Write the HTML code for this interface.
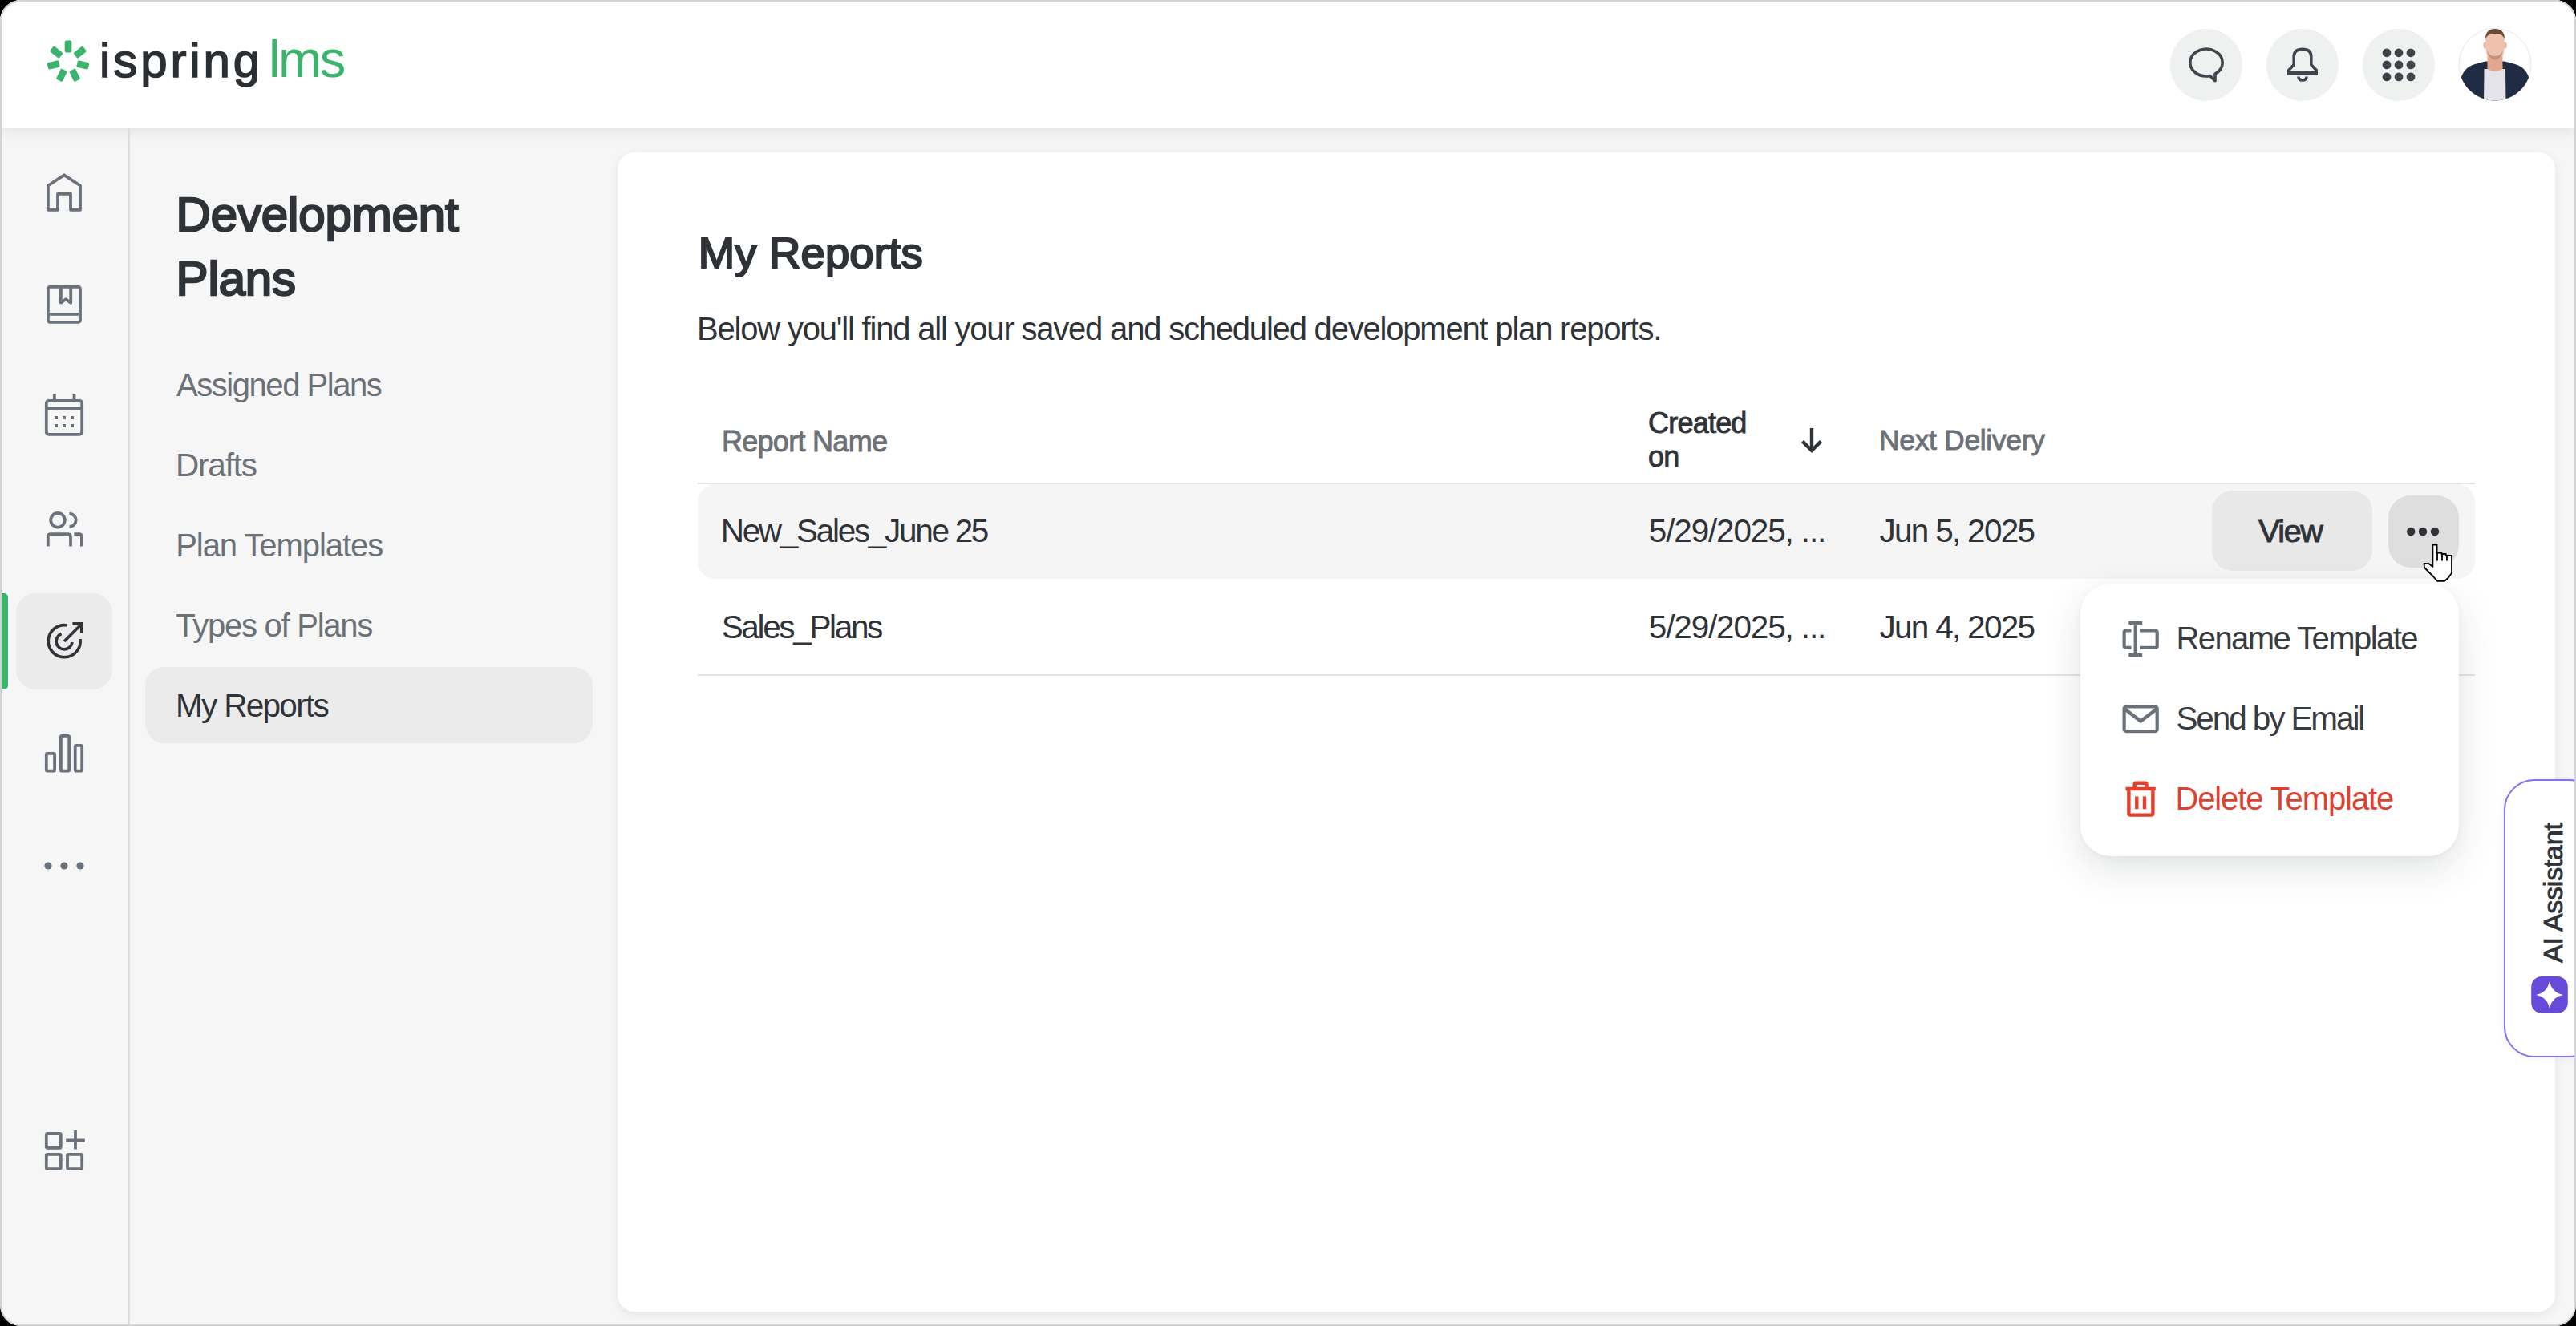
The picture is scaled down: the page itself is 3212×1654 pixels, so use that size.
<!DOCTYPE html>
<html><head><meta charset="utf-8"><title>My Reports</title>
<style>
html,body{margin:0;padding:0;width:3212px;height:1654px;overflow:hidden;background:#000;}
body{position:relative;font-family:"Liberation Sans",sans-serif;}
.abs{position:absolute;}
.t{position:absolute;white-space:nowrap;line-height:1;}
#win{position:absolute;left:0;top:0;width:3212px;height:1654px;background:#f6f6f6;border-radius:26px;overflow:hidden;}
#frame{position:absolute;left:0;top:0;width:3208px;height:1650px;border:2px solid #d3d3d3;border-radius:26px;pointer-events:none;}
#header{position:absolute;left:0;top:0;width:3212px;height:160px;background:#fff;box-shadow:0 3px 18px rgba(0,0,0,0.09);}
#divider{position:absolute;left:160px;top:160px;width:2px;height:1494px;background:#dddde0;}
#card{position:absolute;left:770px;top:190px;width:2416px;height:1446px;background:#fff;border-radius:21px;box-shadow:0 3px 14px rgba(0,0,0,0.07);}
.hc{position:absolute;top:36px;width:90px;height:90px;border-radius:50%;background:#eff0f0;}
svg{position:absolute;left:0;top:0;overflow:visible;}
</style></head>
<body>
<div id="win">
  <div id="header"></div>
  <div id="divider"></div>
  <!-- active tile -->
  <div class="abs" style="left:20px;top:740px;width:120px;height:120px;border-radius:24px;background:#ebebeb;"></div>
  <div class="abs" style="left:0px;top:740px;width:10px;height:120px;border-radius:0 5px 5px 0;background:#3cb46e;"></div>
  <!-- my reports active nav -->
  <div class="abs" style="left:181px;top:832px;width:558px;height:95px;border-radius:24px;background:#ebebeb;"></div>
  <div id="card"></div>
  <!-- header circles -->
  <div class="hc" style="left:2706px;"></div>
  <div class="hc" style="left:2826px;"></div>
  <div class="hc" style="left:2946px;"></div>
  <!-- table -->
  <div class="abs" style="left:870px;top:602px;width:2216px;height:2px;background:#e3e3e3;"></div>
  <div class="abs" style="left:870px;top:604px;width:2216px;height:118px;border-radius:22px;background:#f5f5f5;"></div>
  <div class="abs" style="left:870px;top:841px;width:2216px;height:2px;background:#e3e3e3;"></div>
  <div class="abs" style="left:2758px;top:612px;width:200px;height:100px;border-radius:26px;background:#e8e8e8;"></div>
  <div class="abs" style="left:2978px;top:618px;width:88px;height:90px;border-radius:28px;background:#dededf;"></div>
<div class="t" style="left:219.6px;top:238.2px;font-size:60.0px;color:#2f3337;letter-spacing:-0.15px;-webkit-text-stroke:2.40px #2f3337;">Development</div>
<div class="t" style="left:219.6px;top:317.9px;font-size:60.0px;color:#2f3337;letter-spacing:-0.15px;-webkit-text-stroke:2.40px #2f3337;">Plans</div>
<div class="t" style="left:220.0px;top:460.3px;font-size:40.0px;color:#6c7177;letter-spacing:-1.45px;">Assigned Plans</div>
<div class="t" style="left:219.0px;top:560.0px;font-size:40.5px;color:#6c7177;letter-spacing:-1.2px;">Drafts</div>
<div class="t" style="left:219.2px;top:660.2px;font-size:40.0px;color:#6c7177;letter-spacing:-1.05px;">Plan Templates</div>
<div class="t" style="left:219.2px;top:760.3px;font-size:40.0px;color:#6c7177;letter-spacing:-1.25px;">Types of Plans</div>
<div class="t" style="left:219.0px;top:860.0px;font-size:40.5px;color:#2f3337;letter-spacing:-1.7px;">My Reports</div>
<div class="t" style="left:870.7px;top:289.0px;font-size:54.5px;color:#2f3337;letter-spacing:0.15px;-webkit-text-stroke:2.18px #2f3337;">My Reports</div>
<div class="t" style="left:869.1px;top:390.0px;font-size:40.0px;color:#2f3337;letter-spacing:-1.2px;">Below you'll find all your saved and scheduled development plan reports.</div>
<div class="t" style="left:899.9px;top:533.0px;font-size:36.0px;color:#6c7177;letter-spacing:-0.7px;-webkit-text-stroke:0.90px #6c7177;">Report Name</div>
<div class="t" style="left:2055.1px;top:510.1px;font-size:36.0px;color:#2f3337;letter-spacing:-0.8px;-webkit-text-stroke:0.90px #2f3337;">Created</div>
<div class="t" style="left:2055.1px;top:552.3px;font-size:36.0px;color:#2f3337;letter-spacing:-0.8px;-webkit-text-stroke:0.90px #2f3337;">on</div>
<div class="t" style="left:2343.0px;top:532.0px;font-size:35.5px;color:#6c7177;letter-spacing:-0.35px;-webkit-text-stroke:0.89px #6c7177;">Next Delivery</div>
<div class="t" style="left:898.7px;top:642.2px;font-size:40.5px;color:#2f3337;letter-spacing:-2.3px;">New_Sales_June 25</div>
<div class="t" style="left:2055.8px;top:642.2px;font-size:40.5px;color:#2f3337;letter-spacing:-1.15px;">5/29/2025, ...</div>
<div class="t" style="left:2343.4px;top:642.2px;font-size:40.5px;color:#2f3337;letter-spacing:-1.7px;">Jun 5, 2025</div>
<div class="t" style="left:899.7px;top:762.3px;font-size:40.5px;color:#2f3337;letter-spacing:-2.35px;">Sales_Plans</div>
<div class="t" style="left:2055.8px;top:762.2px;font-size:40.5px;color:#2f3337;letter-spacing:-1.15px;">5/29/2025, ...</div>
<div class="t" style="left:2343.4px;top:762.2px;font-size:40.5px;color:#2f3337;letter-spacing:-1.7px;">Jun 4, 2025</div>
<div class="t" style="left:2816.2px;top:642.9px;font-size:39.5px;color:#2f3337;letter-spacing:-1.45px;-webkit-text-stroke:0.99px #2f3337;">View</div>

  <!-- dropdown -->
  <div class="abs" style="left:2594px;top:728px;width:472px;height:340px;border-radius:38px;background:#fff;box-shadow:0 16px 48px rgba(20,35,35,0.13),0 2px 8px rgba(0,0,0,0.04);"></div>
<div class="t" style="left:2713.4px;top:776.2px;font-size:40.0px;color:#383c40;letter-spacing:-1.55px;">Rename Template</div>
<div class="t" style="left:2713.4px;top:876.2px;font-size:40.5px;color:#383c40;letter-spacing:-2.1px;">Send by Email</div>
<div class="t" style="left:2712.4px;top:975.5px;font-size:40.0px;color:#e0412f;letter-spacing:-1.1px;">Delete Template</div>

  <!-- AI tab -->
  <div class="abs" style="left:3122px;top:972px;width:120px;height:347px;border:2px solid #8172f0;border-radius:38px;background:#fff;box-sizing:border-box;box-shadow:-2px 2px 10px rgba(0,0,0,0.04);"></div>
<div class="t" style="left:3165.9px;top:1200.5px;font-size:34.0px;color:#2f3337;letter-spacing:-0.25px;-webkit-text-stroke:0.85px #2f3337;transform-origin:0 0;transform:rotate(-90deg);">AI Assistant</div>

  <svg width="3212" height="1654" viewBox="0 0 3212 1654">
    <!-- logo spinner -->
    <g fill="#3bb36d" transform="translate(85 76.8)">
      <rect x="-4.35" y="-26.2" width="8.7" height="14.8" rx="1.8" transform="rotate(0)"/>
      <rect x="-4.35" y="-26.2" width="8.7" height="14.8" rx="1.8" transform="rotate(51.43)"/>
      <rect x="-4.35" y="-26.2" width="8.7" height="14.8" rx="1.8" transform="rotate(102.86)"/>
      <rect x="-4.35" y="-26.2" width="8.7" height="14.8" rx="1.8" transform="rotate(154.29)"/>
      <rect x="-4.35" y="-26.2" width="8.7" height="14.8" rx="1.8" transform="rotate(205.71)"/>
      <rect x="-4.35" y="-26.2" width="8.7" height="14.8" rx="1.8" transform="rotate(257.14)"/>
      <rect x="-4.35" y="-26.2" width="8.7" height="14.8" rx="1.8" transform="rotate(308.57)"/>
    </g>
    <text x="124" y="95.7" font-family="Liberation Sans" font-weight="400" font-size="60" fill="#2b2f33" stroke="#2b2f33" stroke-width="1.6" letter-spacing="3.9">ispring</text>
    <text x="335" y="95.7" font-family="Liberation Sans" font-weight="400" font-size="65" fill="#3bb36d" letter-spacing="-2.4">lms</text>

    <!-- sidebar icons -->
    <g fill="none" stroke="#6b727b" stroke-width="3.8" stroke-linejoin="round">
      <path d="M59.9 261.8 V231.5 L80 218.3 L100 231.5 V261.8 H88 V241.8 H72 V261.8 Z"/>
      <rect x="59.9" y="357.8" width="40.1" height="44" rx="2.5"/>
      <path d="M59.9 391.9 H100"/>
      <path d="M75.9 357.8 V377.6 L82 373.2 L88.2 377.6 V357.8"/>
      <rect x="57.8" y="499.9" width="44.4" height="41.9" rx="3"/>
      <path d="M57.8 509.9 H102.2"/>
      <path d="M67.8 492 V500 M92.5 492 V500"/>
      <circle cx="72" cy="648.8" r="8.8"/>
      <path d="M86.5 640.6 A8.2 8.2 0 0 1 86.5 657"/>
      <path d="M59.8 681.5 V669.6 Q59.8 666.1 63.3 666.1 H84.5 Q88 666.1 88 669.6 V681.5"/>
      <path d="M92.4 666.1 H98.4 Q101.9 666.1 101.9 669.6 V681.5"/>
      <rect x="57.8" y="939.8" width="10.3" height="21.9" rx="1.5"/>
      <rect x="75.9" y="917.8" width="10.3" height="43.9" rx="1.5"/>
      <rect x="93.7" y="929.8" width="8.5" height="31.9" rx="1.5"/>
      <rect x="57.8" y="1414" width="18" height="17.8" rx="1.5"/>
      <rect x="57.8" y="1439.9" width="18" height="18.2" rx="1.5"/>
      <rect x="84" y="1439.9" width="18.2" height="18.2" rx="1.5"/>
      <path d="M94 1410 V1433.6 M82.2 1422.5 H105.8"/>
    </g>
    <g fill="#6b727b">
      <rect x="68" y="519" width="4" height="4"/><rect x="78" y="519" width="4" height="4"/><rect x="88" y="519" width="4" height="4"/>
      <rect x="68" y="529" width="4" height="4"/><rect x="78" y="529" width="4" height="4"/><rect x="88" y="529" width="4" height="4"/>
      <circle cx="60" cy="1080" r="4.6"/><circle cx="80" cy="1080" r="4.6"/><circle cx="100" cy="1080" r="4.6"/>
    </g>
    <!-- active target icon -->
    <g fill="none" stroke="#2f3337" stroke-width="3.7">
      <path d="M83.5 780 A20 20 0 1 0 100 797"/>
      <path d="M76.5 790.6 A10 10 0 1 0 90 801"/>
      <path d="M80 800 L100 780"/>
      <path d="M90.4 777.9 H101.75 V789.6" stroke-linejoin="miter"/>
    </g>

    <!-- header icons -->
    <g fill="none" stroke="#40444b" stroke-width="3.6" stroke-linejoin="round">
      <path d="M2755.5 94.5 A20.2 16.9 0 1 1 2762 92.2 V100.8 Z"/>
      <path d="M2853.8 91.6 V87.5 L2860.2 80.8 V70.5 Q2860.2 61.4 2871 61.4 Q2881.8 61.4 2881.8 70.5 V80.8 L2888.2 87.5 V91.6 Z"/>
      <rect x="2852" y="88.9" width="38" height="5" fill="#40444b" stroke="none"/>
      <path d="M2866 95.5 Q2866 100 2871 100 Q2876 100 2876 95.5"/>
    </g>
    <g fill="#40444b">
      <circle cx="2976" cy="65.8" r="5.4"/><circle cx="2991" cy="65.8" r="5.4"/><circle cx="3006" cy="65.8" r="5.4"/>
      <circle cx="2976" cy="80.9" r="5.4"/><circle cx="2991" cy="80.9" r="5.4"/><circle cx="3006" cy="80.9" r="5.4"/>
      <circle cx="2976" cy="95.9" r="5.4"/><circle cx="2991" cy="95.9" r="5.4"/><circle cx="3006" cy="95.9" r="5.4"/>
    </g>
    <!-- avatar -->
    <defs><clipPath id="av"><circle cx="3111" cy="80.5" r="45"/></clipPath></defs>
    <circle cx="3111" cy="80.5" r="45" fill="#fff" stroke="#e6e6e6" stroke-width="1"/>
    <g clip-path="url(#av)">
      <path d="M3068 99 Q3072 84 3086 80 L3099 76.5 H3123 L3136 80 Q3150 84 3154 99 L3156 130 H3066 Z" fill="#1f2c44"/>
      <path d="M3097.5 86 H3124 L3124.5 130 H3097 Z" fill="#e3e3e9"/>
      <path d="M3101.5 66 H3120.5 V86 Q3111 92 3101.5 86 Z" fill="#e2a78e"/>
      <ellipse cx="3098.6" cy="56.5" rx="2.2" ry="4" fill="#e9b29b"/>
      <ellipse cx="3123.4" cy="56.5" rx="2.2" ry="4" fill="#e9b29b"/>
      <path d="M3099.5 48 Q3099.5 40 3111 40 Q3122.5 40 3122.5 48 V60 Q3122.5 74 3111 74 Q3099.5 74 3099.5 60 Z" fill="#f0c2ae"/>
      <path d="M3099 50 Q3098.5 36 3111 36 Q3123.5 36 3123 50 Q3122 42 3111 42 Q3100 42 3099 50 Z" fill="#6a4a3a"/>
      <path d="M3101.5 63 Q3102 74 3111 74.5 Q3120 74 3120.5 63 Q3118.5 70 3111 70 Q3103.5 70 3101.5 63 Z" fill="#b98672" opacity="0.8"/>
    </g>

    <!-- sort arrow -->
    <g fill="none" stroke="#2f3337" stroke-width="4.4">
      <path d="M2259 534 V561"/>
      <path d="M2247.5 550.5 L2259 562 L2270.5 550.5"/>
    </g>
    <!-- more dots -->
    <g fill="#2f3337">
      <circle cx="3006.2" cy="663" r="5.2"/><circle cx="3021" cy="663" r="5.2"/><circle cx="3036" cy="663" r="5.2"/>
    </g>
    <!-- menu icons -->
    <g fill="none" stroke="#6b7178" stroke-width="4.2">
      <path d="M2662.7 776.5 V817.5 M2654.3 776.8 H2671.2 M2654.3 817.2 H2671.2"/>
      <path d="M2657.5 786.5 H2651 Q2648.6 786.5 2648.6 789 V805.5 Q2648.6 807.8 2651 807.8 H2657.5"/>
      <path d="M2668 786.5 H2687.3 Q2689.7 786.5 2689.7 789 V805.5 Q2689.7 807.8 2687.3 807.8 H2668"/>
      <rect x="2648.6" y="881.5" width="41.1" height="30.6" rx="2.5"/>
      <path d="M2649.5 884.5 L2669.2 899.5 L2689 884.5"/>
    </g>
    <g fill="none" stroke="#e0412f" stroke-width="4.4">
      <path d="M2650.5 984 H2687.8"/>
      <path d="M2661.7 984 V978.6 Q2661.7 976.7 2663.6 976.7 H2674.6 Q2676.5 976.7 2676.5 978.6 V984"/>
      <path d="M2654.4 984 V1014.5 Q2654.4 1016.6 2656.5 1016.6 H2682.3 Q2684.4 1016.6 2684.4 1014.5 V984"/>
      <path d="M2664.3 993.5 V1009.3 M2674 993.5 V1009.3"/>
    </g>
    <!-- AI icon -->
    <rect x="3156.2" y="1218" width="45.6" height="45.8" rx="13" fill="#664bd8"/>
    <path d="M3179 1224 Q3181.8 1238.2 3196 1241 Q3181.8 1243.8 3179 1258 Q3176.2 1243.8 3162.2 1241 Q3176.2 1238.2 3179 1224 Z" fill="#fff"/>
    <!-- cursor -->
    <g stroke="#000" stroke-width="1.8" stroke-linejoin="round">
      <path d="M3033.4 679.5 H3038.6 V689.5 H3044.4 V691 H3049.8 V692.8 H3057 V714.8 L3052.5 721 L3048 724.8 H3039 L3034 719 L3023 708 L3022.6 703 H3028.5 L3033.4 707 Z" fill="#fff"/>
      <path d="M3039 690 V699.6 M3045 691.5 V699.6 M3051 693 V699.6" fill="none"/>
    </g>
  </svg>
  <div id="frame"></div>
</div>
</body></html>
